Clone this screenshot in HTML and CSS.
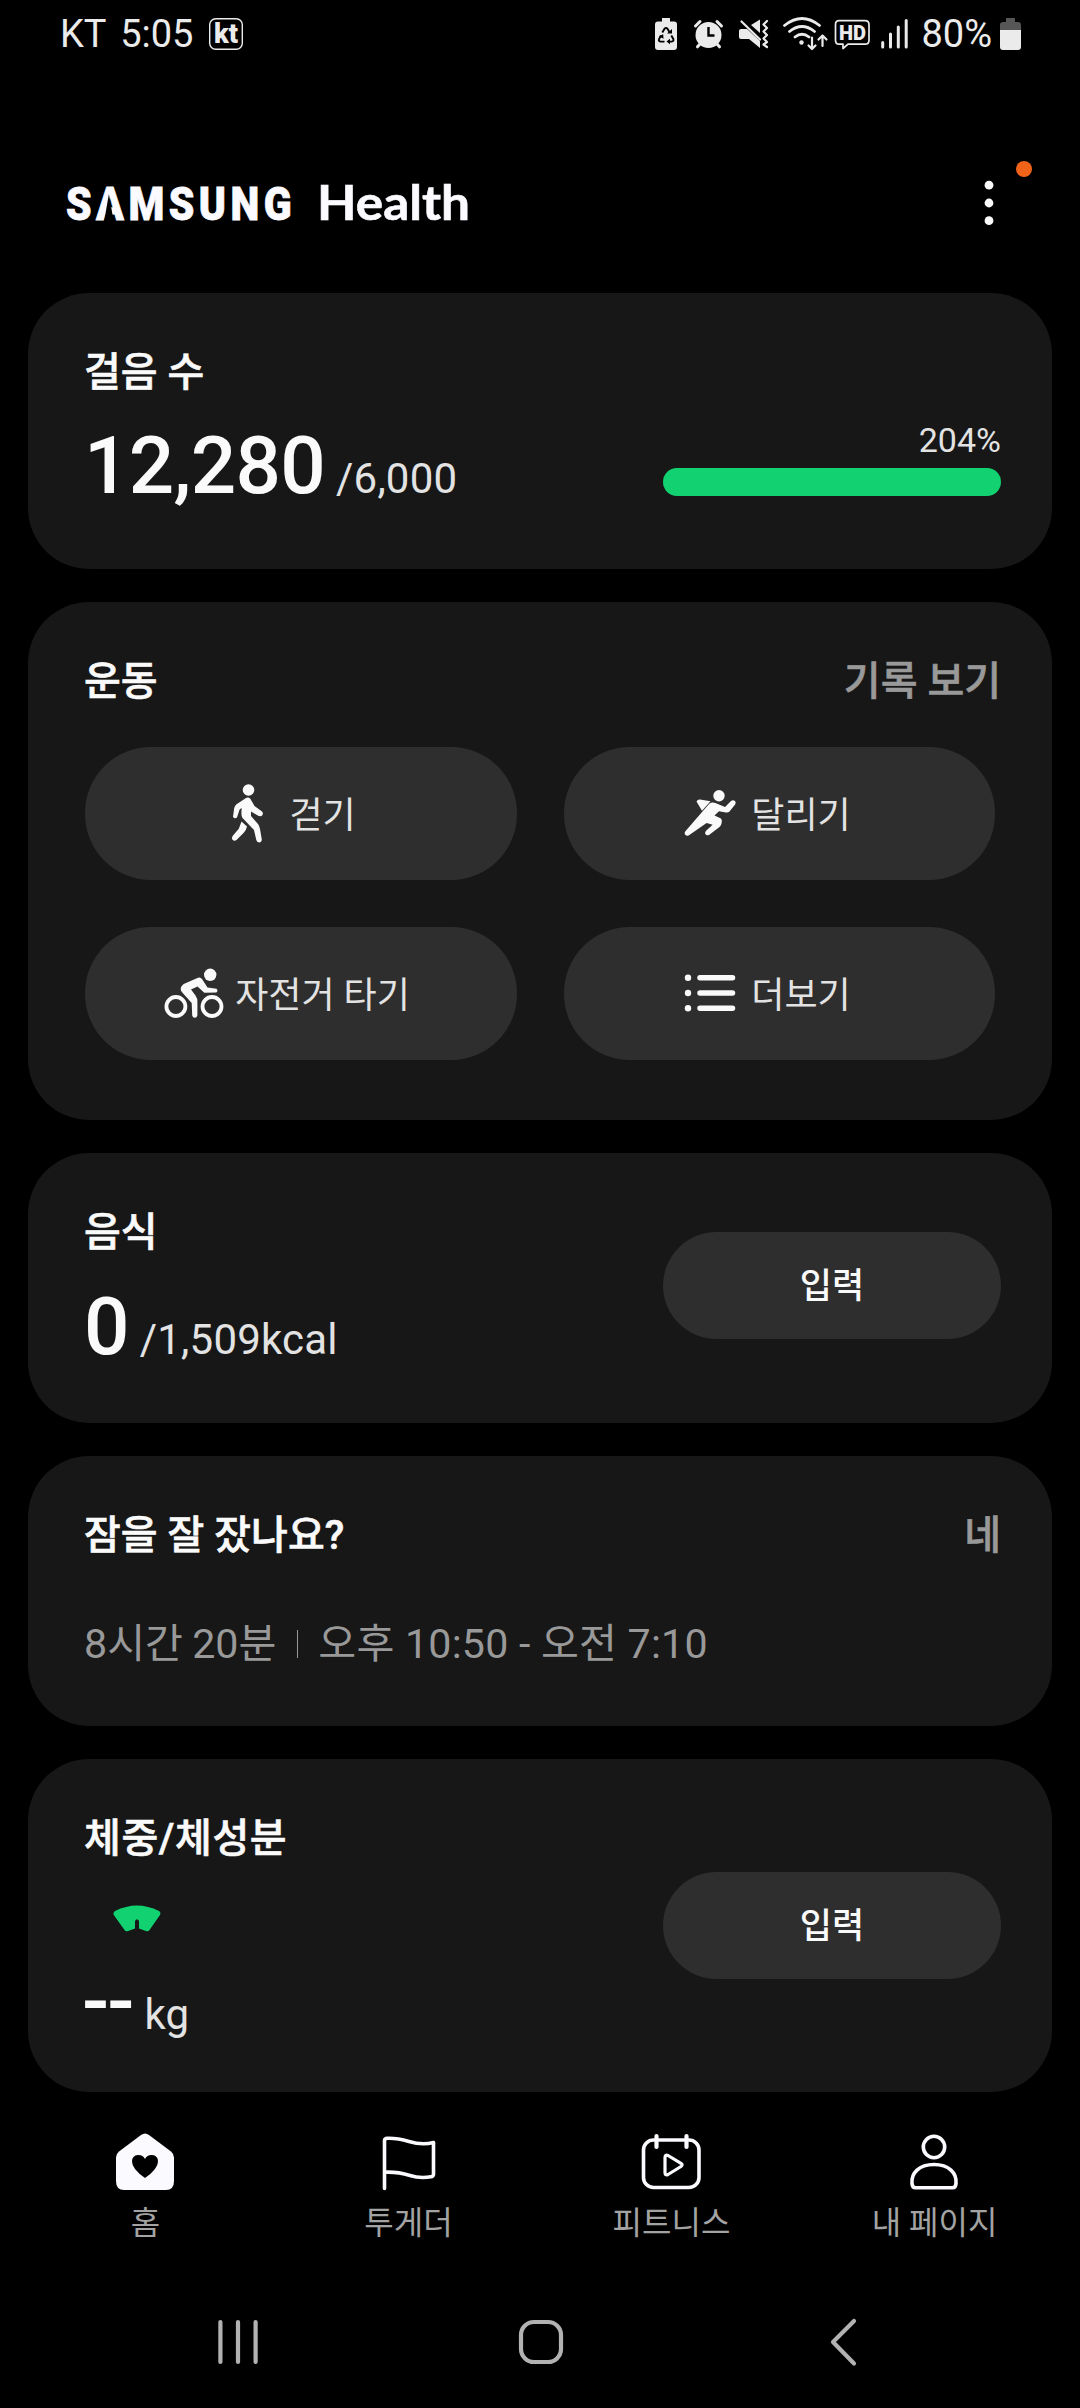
FILE: index.html
```html
<!DOCTYPE html>
<html lang="ko">
<head>
    <meta charset="UTF-8">
    <meta name="viewport" content="width=device-width, initial-scale=1.0">
    <title>Samsung Health</title>
    <link rel="stylesheet" href="styles.css">
</head>
<body>
    <div class="status-bar">
        <span class="status-text">KT 5:05</span>
        <svg class="kt-badge" width="36" height="34" viewBox="0 0 36 34">
            <rect x="1.7" y="1.7" width="32.6" height="30.6" rx="6" fill="none" stroke="#ebebeb" stroke-width="1.4"/>
            <text x="6" y="26" class="kt-text" textLength="24" lengthAdjust="spacingAndGlyphs">kt</text>
        </svg>
        <svg class="status-icons" width="256" height="40" viewBox="652 14 256 40">
            <!-- battery saver -->
            <path d="M661 18h8v3.500h4q3 0 3 3V47q0 3-3 3H657q-3 0-3-3V24.500q0-3 3-3h4z" fill="#ebebeb"/>
            <g fill="none" stroke="#000" stroke-width="1.900">
                <path d="M661.300 32.500l2.200-3.700q1.500-1.900 3 0l2.200 3.700M670.300 35.500l2 3.500q.8 2.300-1.600 2.600h-3.500M663.500 41.600h-4q-2.300-.5-1.400-2.600l2-3.500"/>
            </g>
            <path d="M666 33.500h5v-4.500zM669 38.800v5.500l-3.500-2.700zM657.800 36.200l4.400-1.900.3 4.500z" fill="#000"/>
            <!-- alarm -->
            <circle cx="707.500" cy="35" r="13" fill="#ebebeb"/>
            <path d="M694.500 26l4.500-4.500M720.500 26l-4.500-4.500M699 44l-2.500 2.800M716 44l2.500 2.800" stroke="#ebebeb" stroke-width="3" stroke-linecap="round"/>
            <path d="M707.500 27v8.500h6" fill="none" stroke="#000" stroke-width="2.400"/>
            <!-- sound off, vibrate -->
            <path d="M740 29h6l13 12v7l-11-9h-8q-2 0-2-2v-6q0-2 2-2zM750 25l9-5.500V33z" fill="#ebebeb"/>
            <path d="M740.500 21.500l18.500 18" stroke="#ebebeb" stroke-width="2.200" stroke-linecap="round"/>
            <path d="M766 21l-3.500 3.500 3.500 3.500-3.500 3.500 3.500 3.500-3.500 3.500 3.500 3.500-3.500 2.500 3.500 2.500" fill="none" stroke="#ebebeb" stroke-width="2.200" stroke-linecap="round" stroke-linejoin="round"/>
            <!-- wifi -->
            <g fill="none" stroke="#ebebeb" stroke-width="2.800" stroke-linecap="round" stroke-linejoin="round">
                <path d="M783.500 25.500q17.500-14 35 0M788.500 31.500q12.500-10 25 0M794 37q7-5.500 14 0"/>
                <path d="M811 37.500v11M807.500 45.500l3.500 3.500 3.500-3.500M821.500 46V35.500M817.500 39.500l4-4 4 4" stroke-width="2.200"/>
            </g>
            <circle cx="800.500" cy="42.500" r="2.200" fill="#ebebeb"/>
            <!-- HD voice -->
            <path d="M838 20.700h26q4 0 4 4v15.500q0 4-4 4H847l-5 4.300v-4.300h-4q-3.500 0-3.500-4V24.700q0-4 3.500-4z" fill="none" stroke="#ebebeb" stroke-width="1.700" stroke-linejoin="round"/>
            <text x="838" y="39.800" class="hd-text" textLength="27" lengthAdjust="spacingAndGlyphs">HD</text>
            <!-- signal -->
            <path d="M881.700 42.500v4.500M889.500 34v13M897.300 27v20M905.200 20.500v26.500" stroke="#ebebeb" stroke-width="3" stroke-linecap="round"/>
        </svg>
        <span class="status-text percent">80%</span>
        <svg class="battery" width="21" height="32" viewBox="0 0 21 32">
            <path d="M6 0h9v4h3q3 0 3 3v5H0V7q0-3 3-3h3z" fill="#565656"/>
            <path d="M0 12h21v17q0 3-3 3H3q-3 0-3-3z" fill="#ebebeb"/>
        </svg>
    </div>

    <header class="app-header">
        <svg class="logo" width="420" height="70" viewBox="64 168 420 70">
            <text x="66" y="219.500" class="samsung" textLength="230" lengthAdjust="spacingAndGlyphs">SAMSUNG</text>
            <!-- the A of the wordmark has no crossbar -->
            <path d="M104.200 221l4.700-27 4.700 27z" fill="#000"/>
            <text x="317" y="220" class="health" textLength="153" lengthAdjust="spacingAndGlyphs">Health</text>
        </svg>
        <div class="menu">
            <svg width="10" height="46" viewBox="0 0 10 46" fill="#fafafa">
                <circle cx="5" cy="5.200" r="4.400"/>
                <circle cx="5" cy="23" r="4.400"/>
                <circle cx="5" cy="40.700" r="4.400"/>
            </svg>
            <span class="badge"></span>
        </div>
    </header>

    <main class="cards">
        <section class="card steps">
            <div>
                <h2>걸음 수</h2>
                <p class="value"><strong>12,280</strong><span>/6,000</span></p>
            </div>
            <div class="progress">
                <span>204%</span>
                <div class="bar"></div>
            </div>
        </section>

        <section class="card exercise">
            <div class="card-head">
                <h2>운동</h2>
                <span class="link">기록 보기</span>
            </div>
            <div class="exercise-grid">
                <div class="pill">
                    <svg width="60" height="60" viewBox="219 784 60 60" fill="#fafafa">
                        <circle cx="249.500" cy="790" r="5.800"/>
                        <path d="M247 798q2.500-1.200 4.500 1l4 7 7.500 5.500q2.200 2.500-.8 4.800l-2.500-.3-7.700-4.500v4.500l7 8q1.500 2 2 5l1.800 10.500q-.2 3-2.700 3-2.300-.2-2.800-2.500l-2.300-10-11.500-12q-1.200-2-1.100-5l.2-5-2 1.500-2.600 8q-2.500 1.800-4-.8l1.200-8.800q.5-2 2-3.500z"/>
                        <path d="M242.500 821.500l5.500 5q-.8 3.500-3 6l-7.500 7.500q-2.200 1.500-4-.3-1.300-2 .3-4l6-7z"/>
                    </svg>
                    <span>걷기</span>
                </div>
                <div class="pill">
                    <svg width="60" height="60" viewBox="681 784 60 60" fill="#fafafa">
                        <circle cx="720" cy="795.700" r="5.700"/>
                        <path d="M710 804q3-2.500 7-.7l9 3.700 6-6q2-1.500 4 0 1.200 1.600.3 3.200l-5.800 7.300q-1.200 1.300-3.500 1l-7-1.300-4.500 4.300 6 2.700q2 1.300 1 5.300-.5 2-2 3.500l-10.500 8q-2.500 1-3.700-1-.7-1.700.8-3.200l6.500-6-6-1.800-18 12.500q-2.800.7-3.800-1.200-.6-2 .8-3.300z"/>
                        <path d="M697.500 801.500q1-2.200 3.500-2l10.500 1.800-8.500 9.500z"/>
                    </svg>
                    <span>달리기</span>
                </div>
                <div class="pill">
                    <svg width="60" height="60" viewBox="165 964 60 60" fill="#fafafa">
                        <circle cx="211.200" cy="974.800" r="6.200"/>
                        <g fill="none" stroke="#fafafa" stroke-width="3.800">
                            <circle cx="176.900" cy="1006.500" r="9.500"/>
                            <circle cx="213" cy="1006.500" r="9.500"/>
                        </g>
                        <path d="M199 977.700q2.500-.8 4 1.300l5.500 8.500 9 1.300q2 2-.2 3.800l-12 .2-6.800-6.300-6.500 3 4.500 6q2 3 1.900 6v14q-.3 2-2.600 2.200-2.400-.2-2.600-2.200l-.5-12.500-9-10q-3.500-3.500-1-7l2-2z"/>
                    </svg>
                    <span>자전거 타기</span>
                </div>
                <div class="pill">
                    <svg width="60" height="60" viewBox="681 964 60 60" fill="#fafafa">
                        <circle cx="689" cy="977.800" r="3.200"/>
                        <circle cx="689" cy="993" r="3.200"/>
                        <circle cx="689" cy="1008.300" r="3.200"/>
                        <path d="M701 977.800h32.500M701 993h32.500M701 1008.300h32.500" stroke="#fafafa" stroke-width="5.500" stroke-linecap="round"/>
                    </svg>
                    <span>더보기</span>
                </div>
            </div>
        </section>

        <section class="card food">
            <div>
                <h2>음식</h2>
                <p class="value"><strong>0</strong><span>/1,509kcal</span></p>
            </div>
            <div class="input-btn">입력</div>
        </section>

        <section class="card sleep">
            <div class="card-head">
                <h2>잠을 잘 잤나요?</h2>
                <span class="link">네</span>
            </div>
            <div class="sleep-time">
                <span>8시간 20분</span>
                <i></i>
                <span class="range">오후 10:50 - 오전 7:10</span>
            </div>
        </section>

        <section class="card weight">
            <div>
                <h2>체중/체성분</h2>
                <svg class="scale" width="48" height="27" viewBox="0 0 48 27">
                    <path d="M2 6Q24-5 46 6q2.200 1.500 1 4L36.500 25q-1 1.700-3 1.200L26 23.500V16q-2-3.500-4 0v7.500l-7.500 2.700q-2 .5-3-1.200L.8 10Q-.3 7.500 2 6z" fill="#11d170"/>
                </svg>
                <p class="value"><strong>--</strong><span>kg</span></p>
            </div>
            <div class="input-btn">입력</div>
        </section>
    </main>

    <nav class="tabs">
        <div class="tab">
            <svg width="60" height="60" viewBox="0 0 60 60">
                <path d="M26 3q4-3 8 0l22 16.500q3 2.500 3 6V49q0 9-8 9H9q-8 0-8-9V25.500q0-3.500 3-6z" fill="#fafaff"/>
                <path d="M30 46q-13-9-13-16.500 0-6 6-6.500 5-.2 7 4 2-4.200 7-4 6 .5 6 6.500Q43 37 30 46z" fill="#000"/>
            </svg>
            <span>홈</span>
        </div>
        <div class="tab">
            <svg width="60" height="60" viewBox="0 0 60 60" fill="none" stroke="#fafaff" stroke-width="3.600" stroke-linecap="round" stroke-linejoin="round">
                <path d="M6.500 56.500V8.500q0-2 3-2.200Q19 6 31 9.500q13 4 24.500 1v32q-.3 2-2.500 2.300-11 2-21-1.300-13.500-4-25.500-3.200"/>
            </svg>
            <span>투게더</span>
        </div>
        <div class="tab">
            <svg width="60" height="60" viewBox="0 0 60 60" fill="none" stroke="#fafaff" stroke-width="3.600" stroke-linecap="round" stroke-linejoin="round">
                <rect x="2.500" y="8" width="55.500" height="47.500" rx="10"/>
                <path d="M15.500 4v11M45.500 4v11" stroke-width="4.200"/>
                <path d="M24 25.500q0-3.500 3-2l13 7.800q2.200 1.500 0 3.200L27 42.500q-3 1.300-3-2z" stroke-width="3.200"/>
            </svg>
            <span>피트니스</span>
        </div>
        <div class="tab">
            <svg width="60" height="60" viewBox="0 0 60 60" fill="none" stroke="#fafaff" stroke-width="3.600" stroke-linejoin="round">
                <circle cx="30" cy="15" r="10.700"/>
                <path d="M8 51.500C7 41 15 32.500 30 32.500s23 8.500 22 19q-.3 4.200-3.500 4.200h-37Q8.300 55.700 8 51.500z"/>
            </svg>
            <span>내 페이지</span>
        </div>
    </nav>

    <div class="system-nav">
        <svg width="50" height="50" viewBox="0 0 50 50" stroke="#b2b2b2" stroke-width="4.200" stroke-linecap="round">
            <path d="M7.400 5v40M25 5v40M42.600 5v40"/>
        </svg>
        <svg width="50" height="50" viewBox="0 0 50 50" fill="none" stroke="#b2b2b2" stroke-width="4.200">
            <rect x="5" y="5" width="40" height="40" rx="13"/>
        </svg>
        <svg width="50" height="50" viewBox="0 0 50 50" fill="none" stroke="#b2b2b2" stroke-width="4.200" stroke-linecap="round" stroke-linejoin="round">
            <path d="M36 4L15 25l21 21.500"/>
        </svg>
    </div>
</body>
</html>
```

FILE: styles.css
```css
* {
    box-sizing: border-box;
}
body {
    margin: 0;
    width: 1080px;
    height: 2408px;
    overflow: hidden;
    background: #000;
    color: #fafafa;
    font-family: Roboto, "Noto Sans CJK KR", sans-serif;
}
h2, p {
    margin: 0;
}
svg {
    display: block;
    flex: none;
}

/* status bar */
.status-bar {
    display: flex;
    align-items: center;
    height: 68px;
    padding: 0 59px 0 60px;
}
.status-text {
    font-size: 38px;
    line-height: 68px;
    color: #ebebeb;
    white-space: nowrap;
    word-spacing: 5px;
}
.kt-badge {
    margin-left: 15px;
}
.kt-text {
    font: 900 27px Roboto, sans-serif;
    fill: #ebebeb;
}
.hd-text {
    font: 900 21px Roboto, sans-serif;
    fill: #ebebeb;
}
.status-icons {
    margin-left: auto;
    margin-right: 12px;
}
.battery {
    margin-left: 8px;
}

/* header */
.app-header {
    display: flex;
    justify-content: space-between;
    height: 225px;
    padding: 100px 86px 0 64px;
}
.samsung {
    font: 900 46px Roboto, sans-serif;
    letter-spacing: 5px;
    fill: #fafaff;
    stroke: #fafaff;
    stroke-width: .8px;
}
.health {
    font: 700 48px Lato, sans-serif;
    fill: #fafaff;
    stroke: #fafaff;
    stroke-width: .6px;
}
.menu {
    position: relative;
    height: 46px;
    margin-top: 12px;
}
.badge {
    position: absolute;
    top: -19px;
    left: 32px;
    width: 16px;
    height: 16px;
    border-radius: 50%;
    background: #f2631a;
}

/* cards */
.cards {
    display: flex;
    flex-direction: column;
    gap: 33px;
    padding: 0 28px;
}
.card {
    padding: 51px 51px 0 56px;
    border-radius: 61px;
    background: #171717;
}
.card h2,
.link {
    font-size: 40px;
    font-weight: 500;
    line-height: 58px;
    -webkit-text-stroke: .6px currentColor;
}
.link {
    color: #999;
}
.card-head {
    display: flex;
    justify-content: space-between;
}
.steps, .food, .weight {
    display: flex;
    justify-content: space-between;
}
.value {
    display: flex;
    align-items: baseline;
    gap: 11px;
    line-height: 94px;
}
.value strong {
    font-size: 80px;
    font-weight: 500;
    letter-spacing: -.7px;
}
.value span {
    font-size: 42px;
    letter-spacing: .2px;
    color: #e3e3e3;
}
.steps {
    height: 276px;
}
.steps .value {
    margin-top: 17px;
}
.progress {
    width: 338px;
    padding-top: 76px;
    text-align: right;
    font-size: 34px;
    line-height: 40px;
    color: #e3e3e3;
}
.bar {
    height: 28px;
    margin-top: 8px;
    border-radius: 14px;
    background: #11d170;
}

.exercise {
    height: 518px;
}
.exercise-grid {
    display: grid;
    grid-template-columns: 432px 431px;
    gap: 47px;
    margin: 36px 0 0 1px;
}
.pill {
    display: flex;
    align-items: center;
    justify-content: center;
    gap: 11px;
    height: 133px;
    padding-right: 28px;
    border-radius: 66px;
    background: #2e2e2e;
    font-size: 36px;
    color: #e3e3e3;
}
.pill span {
    margin-bottom: 3px;
}

.food {
    height: 270px;
}
.food .value {
    margin-top: 18px;
}
.input-btn {
    width: 338px;
    height: 107px;
    margin-top: 28px;
    border-radius: 54px;
    background: #2e2e2e;
    font-size: 35px;
    font-weight: 500;
    line-height: 109px;
    text-align: center;
}

.sleep {
    height: 270px;
}
.sleep-time {
    display: flex;
    align-items: center;
    margin-top: 48px;
    font-size: 41.2px;
    line-height: 62px;
    color: #999;
}
.sleep-time i {
    width: 1px;
    height: 28px;
    margin: 0 20px 0 21px;
    background: #999;
}
.sleep-time span {
    word-spacing: -1px;
}
.sleep-time .range {
    letter-spacing: .2px;
    word-spacing: 0;
}

.weight {
    height: 333px;
}
.weight h2 {
    letter-spacing: .6px;
}
.weight .input-btn {
    margin-top: 62px;
}
.scale {
    margin: 37px 0 0 29px;
}
.weight .value {
    gap: 12px;
    margin-top: 23px;
}
.weight .value strong {
    margin-left: -2px;
    letter-spacing: -2px;
}

/* bottom tabs */
.tabs {
    display: flex;
    padding: 40px 14px 0;
}
.tab {
    display: flex;
    flex-direction: column;
    align-items: center;
    width: 263px;
    font-size: 32px;
    line-height: 46px;
    color: #a3a3a3;
}
.tab svg {
    margin-right: 2px;
}
.tab span {
    margin-top: 8px;
}

.system-nav {
    display: flex;
    justify-content: space-between;
    padding: 71px 212px 0 213px;
}
```
